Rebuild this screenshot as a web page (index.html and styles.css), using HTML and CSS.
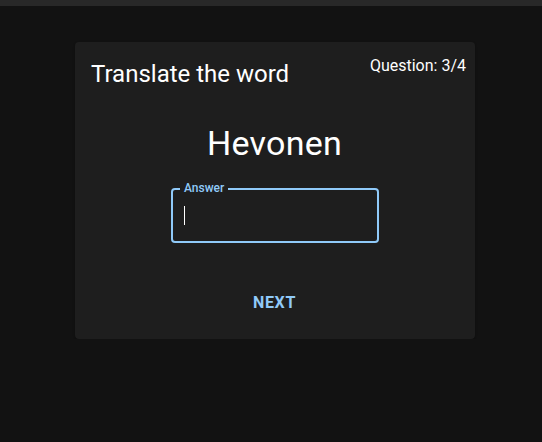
FILE: index.html
```html
<!DOCTYPE html>
<html>
<head>
<meta charset="utf-8">
<link rel="stylesheet" href="styles.css">
</head>
<body>
<div class="topbar"></div>
<main class="page">
  <section class="card">
    <header class="card-head">
      <h1 class="title">Translate the word</h1>
      <span class="counter">Question: 3/4</span>
    </header>
    <div class="word">Hevonen</div>
    <div class="field">
      <span class="field-label">Answer</span>
      <div class="field-input"><span class="caret"></span></div>
    </div>
    <div class="actions">
      <button class="next">Next</button>
    </div>
  </section>
</main>
</body>
</html>
```
FILE: styles.css
```css
html, body {
  margin: 0;
  padding: 0;
  background: #121212;
  font-family: Roboto, "Liberation Sans", Arial, sans-serif;
  color: #fff;
}
.topbar {
  height: 6px;
  background: #282828;
}
.page {
  padding-top: 36px;
  padding-left: 75px;
}
.card {
  width: 400px;
  box-sizing: border-box;
  height: 297px;
  background: #1e1e1e;
  border-radius: 4px;
  box-shadow: 0 2px 1px -1px rgba(0,0,0,0.2), 0 1px 1px 0 rgba(0,0,0,0.14), 0 1px 3px 0 rgba(0,0,0,0.12);
  padding: 16px 16px 0 16px;
  display: flex;
  flex-direction: column;
  align-items: center;
}
.card-head {
  align-self: stretch;
  display: flex;
  justify-content: space-between;
  align-items: flex-start;
}
.title {
  margin: 0;
  font-size: 24px;
  font-weight: 400;
  line-height: 32px;
}
.counter {
  font-size: 16px;
  line-height: 24px;
  margin-top: -4px;
  margin-right: -7px;
}
.word {
  margin-top: 32px;
  margin-left: -1px;
  font-size: 34px;
  line-height: 42px;
  letter-spacing: 0.25px;
}
.field {
  position: relative;
  margin-top: 24px;
  width: 208px;
  height: 55px;
  box-sizing: border-box;
  border: 2px solid #90caf9;
  border-radius: 4px;
}
.field-label {
  position: absolute;
  top: -9px;
  left: 7px;
  padding: 0 4px;
  background: #1e1e1e;
  color: #90caf9;
  font-size: 12px;
  font-weight: 500;
  line-height: 15px;
}
.field-input {
  padding: 16px 11px;
  height: 19px;
  display: flex;
  align-items: center;
}
.caret {
  display: block;
  width: 1px;
  height: 19px;
  background: #fff;
}
.actions {
  margin-top: 42px;
  margin-left: -1px;
}
.next {
  background: none;
  border: 0;
  padding: 6px 8px;
  font-family: Roboto, "Liberation Sans", Arial, sans-serif;
  font-size: 16px;
  font-weight: 700;
  text-transform: uppercase;
  letter-spacing: 0.7px;
  line-height: 24px;
  color: #90caf9;
  cursor: pointer;
}
```
